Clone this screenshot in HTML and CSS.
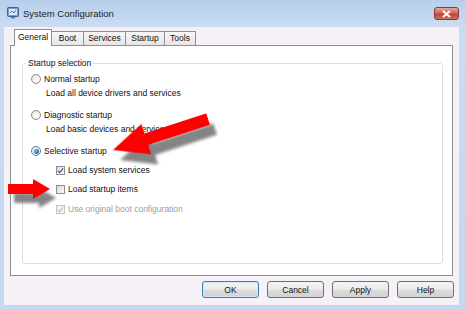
FILE: index.html
```html
<!DOCTYPE html>
<html lang="en">
<head>
    <meta charset="UTF-8">
    <title>System Configuration</title>
    <link rel="stylesheet" href="styles.css">
</head>
<body>
    <div class="window">
        <div class="titlebar">
            <svg class="app-icon" width="12" height="12" viewBox="0 0 12 12">
                <rect x="0.5" y="0.5" width="11" height="9" rx="1" fill="#7a9bc9" stroke="#3f5f8f"/>
                <rect x="2" y="2" width="8" height="6" fill="#d9ebfb"/>
                <path d="M3 6 L5 4 L7 6 L9 3" fill="none" stroke="#3a7bd5" stroke-width="1"/>
                <rect x="4" y="10" width="4" height="1.5" fill="#6d7f99"/>
            </svg>
            <span class="title">System Configuration</span>
            <div class="close">
                <svg width="9" height="8" viewBox="0 0 9 8">
                    <path d="M1 1 L8 7 M8 1 L1 7" stroke="#fff" stroke-width="2"/>
                </svg>
            </div>
        </div>

        <div class="client">
            <div class="tabs">
                <div class="tab active w-general">General</div>
                <div class="tab w-boot">Boot</div>
                <div class="tab w-services">Services</div>
                <div class="tab w-startup">Startup</div>
                <div class="tab w-tools">Tools</div>
            </div>

            <div class="panel">
                <fieldset class="group">
                    <legend>Startup selection</legend>
                    <div class="opt first"><span class="radio"></span>Normal startup</div>
                    <div class="desc">Load all device drivers and services</div>
                    <div class="opt"><span class="radio"></span>Diagnostic startup</div>
                    <div class="desc">Load basic devices and services</div>
                    <div class="opt"><span class="radio checked"></span>Selective startup</div>
                    <div class="check"><span class="box checked"></span>Load system services</div>
                    <div class="check"><span class="box"></span>Load startup items</div>
                    <div class="check last disabled"><span class="box checked"></span>Use original boot configuration</div>
                </fieldset>
            </div>

            <div class="buttons">
                <button class="btn default">OK</button>
                <button class="btn">Cancel</button>
                <button class="btn">Apply</button>
                <button class="btn">Help</button>
            </div>
        </div>

        <!-- red callout arrows pasted over the dialog -->
        <svg class="arrows" width="465" height="309" viewBox="0 0 465 309">
            <defs>
                <filter id="soft" x="-30%" y="-60%" width="160%" height="220%">
                    <feGaussianBlur stdDeviation="1.6"/>
                </filter>
            </defs>
            <g fill="#6e6e6e" opacity="0.85" filter="url(#soft)">
                <polygon transform="translate(120,160) rotate(-18)" points="0,0 35,-16 35,-6 100,-6 100,6 35,6 35,16"/>
                <polygon transform="translate(56,198) rotate(180)" points="0,0 17,-10 17,-5 42,-5 42,5 17,5 17,10"/>
            </g>
            <g fill="#ff0000">
                <polygon transform="translate(113,150) rotate(-18)" points="0,0 35,-16 35,-6 100,-6 100,6 35,6 35,16"/>
                <polygon transform="translate(50,189) rotate(180)" points="0,0 17,-10 17,-5 42,-5 42,5 17,5 17,10"/>
            </g>
        </svg>
    </div>
</body>
</html>
```

FILE: styles.css
```css
body {
    margin: 0;
    font-family: "Liberation Sans", Arial, sans-serif;
    font-size: 8.5px;
    color: #111;
}
.window {
    position: relative;
    width: 465px;
    height: 309px;
    background: linear-gradient(#b7cfec, #c9dcf2 26px, #c3d8f1);
    overflow: hidden;
}
.titlebar {
    height: 27px;
    display: flex;
    align-items: center;
    padding: 0 6px 0 7px;
    box-sizing: border-box;
}
.app-icon {
    margin-top: -1px;
}
.title {
    margin-left: 4px;
    font-size: 9.5px;
    color: #1e1e1e;
}
.close {
    margin-left: auto;
    width: 25px;
    height: 13px;
    box-sizing: border-box;
    border: 1px solid #8a3a31;
    border-radius: 3px;
    background: linear-gradient(#e6a89d, #cf6a5a 45%, #bf4330 55%, #d0705d);
    display: flex;
    align-items: center;
    justify-content: center;
}
.client {
    margin: 0 6px 0 4px;
    height: 278px;
    background: #f5f1f6;
    padding-top: 2px;
    box-sizing: border-box;
}
.tabs {
    display: flex;
    align-items: flex-end;
    height: 16px;
    padding-left: 10px;
}
.tab {
    height: 14px;
    box-sizing: border-box;
    border: 1px solid #8c8f96;
    border-bottom: none;
    margin-left: -1px;
    background: linear-gradient(#f6f6f6, #e6e6e6);
    text-align: center;
    line-height: 13px;
}
.tab.active {
    height: 17px;
    margin-left: 0;
    margin-bottom: -1px;
    background: #fff;
    position: relative;
    z-index: 2;
    line-height: 14px;
}
.w-general { width: 38px; }
.w-boot { width: 33px; }
.w-services { width: 43px; }
.w-startup { width: 40px; }
.w-tools { width: 32px; }
.panel {
    margin: 0 6px;
    height: 231px;
    box-sizing: border-box;
    border: 1px solid #8c8f96;
    background: #fff;
    padding-top: 11px;
    position: relative;
}
.group {
    margin: 0 9px 0 11px;
    height: 207px;
    box-sizing: border-box;
    border: 1px solid #d5dfe5;
    border-radius: 3px;
    padding: 0 0 0 8px;
    min-width: 0;
}
.group legend {
    padding: 0 2px;
    margin-left: -5px;
    line-height: 12px;
}
.opt, .desc, .check {
    display: flex;
    align-items: center;
    height: 14px;
}
.opt {
    margin-top: 8px;
}
.opt.first {
    margin-top: 3px;
}
.desc {
    padding-left: 15px;
    margin-top: 0;
}
.check {
    padding-left: 25px;
    margin-top: 5px;
}
.check.last {
    margin-top: 6px;
}
.radio {
    width: 10px;
    height: 10px;
    box-sizing: border-box;
    border-radius: 50%;
    border: 1px solid #8e8e8e;
    background: radial-gradient(circle at 60% 65%, #fafafa 30%, #d6d6d6);
    margin-right: 3px;
    position: relative;
}
.radio.checked {
    border-color: #5a7fa8;
}
.radio.checked::after {
    content: "";
    position: absolute;
    left: 1.5px;
    top: 1.5px;
    width: 5px;
    height: 5px;
    border-radius: 50%;
    background: radial-gradient(circle at 40% 40%, #7cc8f2, #14508f 80%);
}
.box {
    width: 9px;
    height: 9px;
    box-sizing: border-box;
    border: 1px solid #8e8f8f;
    background: linear-gradient(135deg, #dadada, #fbfbfb);
    margin-right: 3px;
    position: relative;
}
.box.checked::after {
    content: "";
    position: absolute;
    left: 2px;
    top: 0px;
    width: 2px;
    height: 5px;
    border: solid #2d4a9a;
    border-width: 0 1.5px 1.5px 0;
    transform: rotate(40deg);
}
.disabled {
    color: #9d9d9d;
}
.disabled .box {
    border-color: #c4c4c4;
    background: #f4f4f4;
}
.disabled .box.checked::after {
    border-color: #b9b9b9;
}
.buttons {
    display: flex;
    justify-content: flex-end;
    gap: 8px;
    margin-top: 5px;
    padding-right: 5px;
}
.btn {
    width: 57px;
    height: 17px;
    box-sizing: border-box;
    border: 1px solid #707070;
    border-radius: 3px;
    background: linear-gradient(#f3f3f3, #ececec 48%, #dddddd 52%, #d2d2d2);
    font-family: "Liberation Sans", Arial, sans-serif;
    font-size: 8.5px;
    color: #111;
    padding: 0;
}
.btn.default {
    border-color: #3c7fb1;
    box-shadow: inset 0 0 0 1px #cfeafc;
}
.arrows {
    position: absolute;
    left: 0;
    top: 0;
    pointer-events: none;
}
```
